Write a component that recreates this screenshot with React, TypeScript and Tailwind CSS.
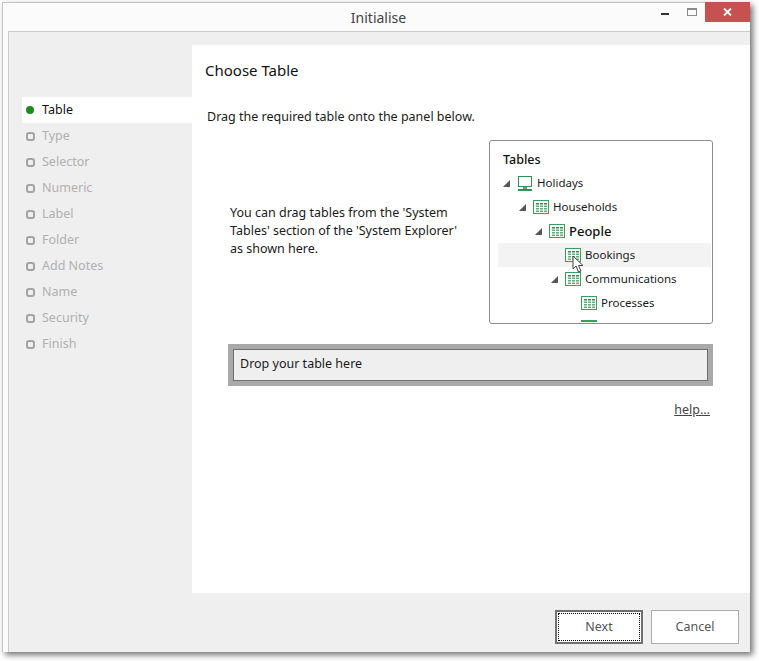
const STEPS = ["Type", "Selector", "Numeric", "Label", "Folder", "Add Notes", "Name", "Security", "Finish"];

const TREE = [
  { label: "Holidays", indent: "pl-[5px]", icon: "monitor", arrow: true },
  { label: "Households", indent: "pl-[21px]", icon: "table", arrow: true },
  { label: "People", indent: "pl-[37px]", icon: "table", arrow: true, bold: true },
  { label: "Bookings", indent: "pl-[53px]", icon: "table", hover: true },
  { label: "Communications", indent: "pl-[53px]", icon: "table", arrow: true },
  { label: "Processes", indent: "pl-[69px]", icon: "table" },
];

function TableIcon() {
  const cells = [];
  for (let y = 0; y < 4; y++) {
    for (let x = 0; x < 3; x++) {
      cells.push(<rect key={`${x}-${y}`} x={3 + x * 4} y={3 + y * 2.5} width="3" height="1.5" fill={y === 0 ? "#2f8a4c" : "#5fae78"} />);
    }
  }
  return (
    <svg width="16" height="14" viewBox="0 0 16 14" className="shrink-0">
      <rect x="0.5" y="0.5" width="15" height="13" fill="#fff" stroke="#3f9a5b" />
      {cells}
    </svg>
  );
}

function MonitorIcon() {
  return (
    <svg width="16" height="15" viewBox="0 0 16 15" className="shrink-0">
      <rect x="1.5" y="0.5" width="13" height="10" fill="#fff" stroke="#2f9450" />
      <rect x="6" y="11" width="4" height="2" fill="#7f8f85" />
      <rect x="1" y="13" width="14" height="2" fill="#2f9450" />
    </svg>
  );
}

function Arrow() {
  return (
    <svg width="7" height="7" viewBox="0 0 7 7" className="shrink-0">
      <path d="M7 0V7H0Z" fill="#555" />
    </svg>
  );
}

function StepDot({ active }: { active?: boolean }) {
  if (active) return <span className="h-[8px] w-[8px] rounded-full bg-[#1f8a1f]" />;
  return <span className="h-[9px] w-[9px] rounded-[3px] border-2 border-[#a3a3a3]" />;
}

export default function App() {
  return (
    <div className="h-[661px] w-[759px] overflow-hidden bg-white pl-[2px] pt-[2px] font-['Noto_Sans',sans-serif] text-[12.5px] text-[#1a1a1a]">
      <div className="relative flex h-[650px] w-[748px] flex-col border-l border-t border-[#c4c4c4] bg-[#fbfbfb] shadow-[3px_3px_6px_rgba(0,0,0,0.55)]">
        <div className="flex h-[28px] shrink-0 items-center justify-center pl-[4px] pt-[1px] text-[14px] text-[#444]">Initialise</div>

        <div className="absolute -top-px right-0 flex items-start">
          <div className="mr-[18px] mt-[11px] h-[2px] w-[8px] bg-[#333]" />
          <div className="mr-[8px] mt-[6px] h-[8px] w-[10px] border border-t-2 border-[#8a8a8a]" />
          <div className="flex h-[20px] w-[45px] items-center justify-center bg-[#c75050]">
            <svg width="9" height="8" viewBox="0 0 9 8">
              <path d="M1 0.5L8 7.5M8 0.5L1 7.5" stroke="#fff" strokeWidth="1.8" />
            </svg>
          </div>
        </div>

        <div className="ml-[5px] flex flex-1 flex-col border-l border-t border-[#cbcbcb] bg-[#efefef] pt-[13px]">
          <div className="flex h-[548px]">
            <div className="w-[183px] shrink-0 pl-[13px] pt-[52px]">
              <div className="flex h-[26px] items-center gap-[8px] bg-white pl-[4px] text-[#111]">
                <StepDot active />
                <span>Table</span>
              </div>
              {STEPS.map((step) => (
                <div key={step} className="flex h-[26px] items-center gap-[7px] pl-[4px] text-[#b0b0b0]">
                  <StepDot />
                  <span>{step}</span>
                </div>
              ))}
            </div>

            <div className="flex-1 bg-white pl-[13px] pt-[14px]">
              <div className="text-[15px] leading-[22px] text-[#111]">Choose Table</div>
              <div className="ml-[2px] mt-[27px] leading-[18px]">Drag the required table onto the panel below.</div>

              <div className="mt-[14px] flex">
                <div className="ml-[25px] mt-[64px] w-[234px] leading-[18px]">
                  You can drag tables from the 'System Tables' section of the 'System Explorer' as shown here.
                </div>
                <div className="relative ml-[25px] h-[184px] w-[224px] overflow-hidden rounded-[3px] border border-[#8c8c8c] bg-white">
                  <div className="pl-[13px] pt-[10px] font-medium leading-[18px] text-[#111]">Tables</div>
                  <div className="ml-[8px] mt-[2px] w-[213px]">
                    {TREE.map((row) => (
                      <div key={row.label} className={`flex h-[24px] items-center ${row.indent} ${row.hover ? "bg-[#f3f3f3]" : ""}`}>
                        <span className="flex w-[14px] shrink-0 items-center">{row.arrow && <Arrow />}</span>
                        {row.icon === "monitor" ? <MonitorIcon /> : <TableIcon />}
                        <span className={`ml-[4px] ${row.bold ? "translate-y-px text-[13px] font-medium text-[#111]" : "text-[11.5px]"}`}>{row.label}</span>
                      </div>
                    ))}
                    <div className="ml-[83px] mt-[5px] h-[2px] w-[16px] bg-[#3f9a5b]" />
                  </div>
                  <svg width="13" height="19" viewBox="0 0 13 19" className="absolute left-[82px] top-[114px]">
                    <path d="M1 1V14L4 11L6.5 17L9 16L6.5 10.5H11Z" fill="#fff" stroke="#444" strokeWidth="1" />
                  </svg>
                </div>
              </div>

              <div className="ml-[23px] mt-[20px] flex h-[42px] w-[485px] items-center border-[5px] border-[#a9a9a9] bg-[#efefef] outline-1 -outline-offset-6 outline-[#6e6e6e]">
                <span className="-translate-y-px pl-[7px]">Drop your table here</span>
              </div>

              <div className="mt-[15px] w-[505px] text-right text-[#444] underline">help...</div>
            </div>
          </div>

          <div className="flex flex-1 justify-end gap-[8px] pr-[11px] pt-[17px]">
            <button className="flex h-[34px] w-[88px] items-center justify-center border-2 border-[#707070] bg-white text-[#555] outline-1 -outline-offset-4 outline-dotted outline-black">
              Next
            </button>
            <button className="flex h-[34px] w-[88px] items-center justify-center border border-[#ababab] bg-white text-[#555]">
              Cancel
            </button>
          </div>
        </div>
      </div>
    </div>
  );
}
